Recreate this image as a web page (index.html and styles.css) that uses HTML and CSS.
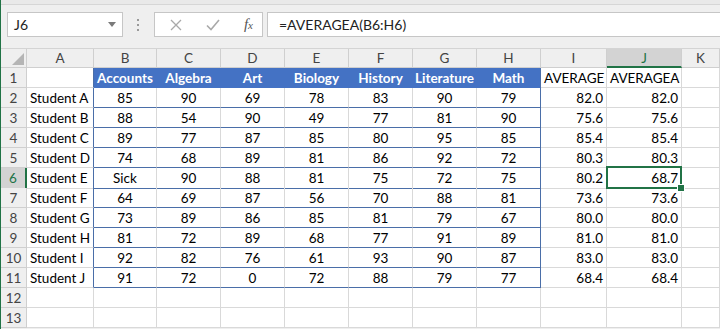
FILE: index.html
```html
<!DOCTYPE html>
<html lang="en">
<head>
  <meta charset="UTF-8">
  <title>AVERAGEA - Sheet1</title>
  <link rel="stylesheet" href="styles.css">
</head>
<body>
  <div class="app">
    <div class="topline"></div>

    <div class="formula-bar">
      <div class="name-box">
        <span>J6</span>
        <svg class="caret" width="8" height="5" viewBox="0 0 8 5"><path d="M0 0 H8 L4 5 Z" fill="#7a7a7a"/></svg>
      </div>
      <div class="grip">
        <svg width="3" height="12" viewBox="0 0 3 12"><rect x="0" y="0" width="2" height="2" fill="#9a9a9a"/><rect x="0" y="5" width="2" height="2" fill="#9a9a9a"/><rect x="0" y="10" width="2" height="2" fill="#9a9a9a"/></svg>
      </div>
      <div class="fx-buttons">
        <svg width="12" height="12" viewBox="0 0 12 12"><path d="M1 1 L11 11 M11 1 L1 11" stroke="#a9a9a9" stroke-width="1.3"/></svg>
        <svg width="14" height="12" viewBox="0 0 14 12"><path d="M1 6.5 L5 10.5 L13 1" stroke="#a9a9a9" stroke-width="1.6" fill="none"/></svg>
        <span class="fx">f<small>x</small></span>
      </div>
      <div class="formula-input">=AVERAGEA(B6:H6)</div>
    </div>

    <div class="sheet">
      <div class="row col-head">
        <div class="cell corner"><svg width="12" height="12" viewBox="0 0 12 12"><path d="M12 0 V12 H0 Z" fill="#b5b5b5"/></svg></div>
        <div class="cell">A</div><div class="cell">B</div><div class="cell">C</div><div class="cell">D</div><div class="cell">E</div><div class="cell">F</div><div class="cell">G</div><div class="cell">H</div><div class="cell">I</div><div class="cell sel-col">J</div><div class="cell">K</div>
      </div>

      <div class="row">
        <div class="cell rh">1</div><div class="cell tl"></div>
        <div class="cell th">Accounts</div><div class="cell th">Algebra</div><div class="cell th">Art</div><div class="cell th">Biology</div><div class="cell th">History</div><div class="cell th">Literature</div><div class="cell th tr">Math</div>
        <div class="cell">AVERAGE</div><div class="cell">AVERAGEA</div><div class="cell"></div>
      </div>
      <div class="row">
        <div class="cell rh">2</div><div class="cell tl">Student A</div>
        <div class="cell td">85</div><div class="cell td">90</div><div class="cell td">69</div><div class="cell td">78</div><div class="cell td">83</div><div class="cell td">90</div><div class="cell td tr">79</div>
        <div class="cell num">82.0</div><div class="cell num">82.0</div><div class="cell"></div>
      </div>
      <div class="row">
        <div class="cell rh">3</div><div class="cell tl">Student B</div>
        <div class="cell td">88</div><div class="cell td">54</div><div class="cell td">90</div><div class="cell td">49</div><div class="cell td">77</div><div class="cell td">81</div><div class="cell td tr">90</div>
        <div class="cell num">75.6</div><div class="cell num">75.6</div><div class="cell"></div>
      </div>
      <div class="row">
        <div class="cell rh">4</div><div class="cell tl">Student C</div>
        <div class="cell td">89</div><div class="cell td">77</div><div class="cell td">87</div><div class="cell td">85</div><div class="cell td">80</div><div class="cell td">95</div><div class="cell td tr">85</div>
        <div class="cell num">85.4</div><div class="cell num">85.4</div><div class="cell"></div>
      </div>
      <div class="row">
        <div class="cell rh">5</div><div class="cell tl">Student D</div>
        <div class="cell td">74</div><div class="cell td">68</div><div class="cell td">89</div><div class="cell td">81</div><div class="cell td">86</div><div class="cell td">92</div><div class="cell td tr">72</div>
        <div class="cell num">80.3</div><div class="cell num">80.3</div><div class="cell"></div>
      </div>
      <div class="row">
        <div class="cell rh sel-row">6</div><div class="cell tl">Student E</div>
        <div class="cell td">Sick</div><div class="cell td">90</div><div class="cell td">88</div><div class="cell td">81</div><div class="cell td">75</div><div class="cell td">72</div><div class="cell td tr">75</div>
        <div class="cell num">80.2</div><div class="cell num active">68.7</div><div class="cell"></div>
      </div>
      <div class="row">
        <div class="cell rh">7</div><div class="cell tl">Student F</div>
        <div class="cell td">64</div><div class="cell td">69</div><div class="cell td">87</div><div class="cell td">56</div><div class="cell td">70</div><div class="cell td">88</div><div class="cell td tr">81</div>
        <div class="cell num">73.6</div><div class="cell num">73.6</div><div class="cell"></div>
      </div>
      <div class="row">
        <div class="cell rh">8</div><div class="cell tl">Student G</div>
        <div class="cell td">73</div><div class="cell td">89</div><div class="cell td">86</div><div class="cell td">85</div><div class="cell td">81</div><div class="cell td">79</div><div class="cell td tr">67</div>
        <div class="cell num">80.0</div><div class="cell num">80.0</div><div class="cell"></div>
      </div>
      <div class="row">
        <div class="cell rh">9</div><div class="cell tl">Student H</div>
        <div class="cell td">81</div><div class="cell td">72</div><div class="cell td">89</div><div class="cell td">68</div><div class="cell td">77</div><div class="cell td">91</div><div class="cell td tr">89</div>
        <div class="cell num">81.0</div><div class="cell num">81.0</div><div class="cell"></div>
      </div>
      <div class="row">
        <div class="cell rh">10</div><div class="cell tl">Student I</div>
        <div class="cell td">92</div><div class="cell td">82</div><div class="cell td">76</div><div class="cell td">61</div><div class="cell td">93</div><div class="cell td">90</div><div class="cell td tr">87</div>
        <div class="cell num">83.0</div><div class="cell num">83.0</div><div class="cell"></div>
      </div>
      <div class="row">
        <div class="cell rh">11</div><div class="cell tl">Student J</div>
        <div class="cell td">91</div><div class="cell td">72</div><div class="cell td">0</div><div class="cell td">72</div><div class="cell td">88</div><div class="cell td">79</div><div class="cell td tr">77</div>
        <div class="cell num">68.4</div><div class="cell num">68.4</div><div class="cell"></div>
      </div>
      <div class="row">
        <div class="cell rh">12</div><div class="cell"></div>
        <div class="cell"></div><div class="cell"></div><div class="cell"></div><div class="cell"></div><div class="cell"></div><div class="cell"></div><div class="cell"></div>
        <div class="cell"></div><div class="cell"></div><div class="cell"></div>
      </div>
      <div class="row">
        <div class="cell rh">13</div><div class="cell"></div>
        <div class="cell"></div><div class="cell"></div><div class="cell"></div><div class="cell"></div><div class="cell"></div><div class="cell"></div><div class="cell"></div>
        <div class="cell"></div><div class="cell"></div><div class="cell"></div>
      </div>
    </div>
  </div>
</body>
</html>
```

FILE: styles.css
```css
* {
  margin: 0;
  padding: 0;
  box-sizing: border-box;
}

html,
body {
  height: 100%;
  overflow: hidden;
}

body {
  font-family: Lato, "Open Sans", sans-serif;
  font-size: 13.5px;
  color: #000;
  background-color: #fff;
}

.app {
  border-left: 1px solid #217346;
  height: 100%;
  background-color: #efefef;
}

.topline {
  height: 5px;
  background-color: #e9e9e9;
  border-bottom: 1px solid #d6d6d6;
}

/* formula bar */
.formula-bar {
  display: flex;
  height: 25px;
  margin-top: 7px;
  padding-left: 6px;
}

.name-box {
  width: 116px;
  background-color: #fff;
  border: 1px solid #c6c6c6;
  display: flex;
  align-items: center;
  justify-content: space-between;
  padding: 0 6px 0 6px;
  color: #222;
  font-size: 14px;
}

.grip {
  width: 31px;
  display: flex;
  align-items: center;
  justify-content: center;
}

.fx-buttons {
  width: 109px;
  background-color: #fff;
  border: 1px solid #c6c6c6;
  display: flex;
  align-items: center;
  justify-content: space-between;
  padding: 0 9px 0 15px;
}

.fx {
  font-family: "Liberation Serif", serif;
  font-style: italic;
  font-size: 15px;
  color: #555;
}

.fx small {
  font-size: 11px;
}

.formula-input {
  flex: 1;
  margin-left: 4px;
  background-color: #fff;
  border: 1px solid #c6c6c6;
  border-right: none;
  padding-left: 11px;
  line-height: 23px;
  color: #222;
  font-size: 14px;
}

/* grid */
.sheet {
  margin-top: 11px;
  border-top: 1px solid #d4d4d4;
  background-color: #fff;
}

.row {
  display: grid;
  grid-template-columns: 26px 67px 63px 64px 64px 64px 64px 64px 64px 66px 75px 1fr;
  height: 20px;
}

.cell {
  border-right: 1px solid #d9d9d9;
  border-bottom: 1px solid #d9d9d9;
  padding: 0 3px;
  line-height: 20px;
  white-space: nowrap;
  overflow: hidden;
}

.col-head {
  height: 19px;
}

.col-head .cell {
  background-color: #efefef;
  color: #444;
  text-align: center;
  line-height: 19px;
  border-color: #cfcfcf;
}

.corner {
  display: flex;
  align-items: flex-end;
  justify-content: flex-end;
  padding: 0 2px 2px 0;
}

.rh {
  background-color: #efefef;
  color: #444;
  text-align: center;
  padding: 0;
  border-color: #cfcfcf;
}

.sel-col {
  background-color: #d3d3d3 !important;
  color: #217346 !important;
  border-bottom: 2px solid #217346 !important;
}

.sel-row {
  background-color: #d3d3d3;
  color: #217346;
  border-right: 2px solid #217346;
}

/* table styling */
.tl {
  border-right-color: #4a6ea8;
}

.th {
  background-color: #4472c4;
  color: #fff;
  font-weight: bold;
  text-align: center;
  padding: 0 1px;
  border-right-color: #4472c4;
  border-bottom-color: #4472c4;
}

.td {
  text-align: center;
  border-bottom-color: #4a6ea8;
}

.tr {
  border-right-color: #4a6ea8;
}

.num {
  text-align: right;
}

.active {
  position: relative;
  overflow: visible;
}

.active::before {
  content: "";
  position: absolute;
  top: -2px;
  bottom: -1px;
  left: -1px;
  right: -1px;
  border: 2px solid #217346;
}

.active::after {
  content: "";
  position: absolute;
  right: -4px;
  bottom: -4px;
  width: 6px;
  height: 6px;
  background-color: #217346;
  border: 1px solid #fff;
}
```
